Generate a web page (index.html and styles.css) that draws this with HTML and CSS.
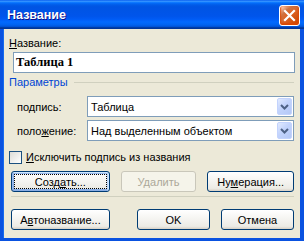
FILE: index.html
```html
<!DOCTYPE html>
<html>
<head>
    <title>Название</title>
    <link rel="stylesheet" href="styles.css">
</head>
<body>
    <div class="window">
        <div class="titlebar">
            <span class="title">Название</span>
            <span class="close-btn">
                <svg width="13" height="13" viewBox="0 0 13 13">
                    <path d="M2 2 L11 11 M11 2 L2 11" stroke="#fff" stroke-width="2.2" stroke-linecap="square"/>
                </svg>
            </span>
        </div>

        <div class="frame">
            <div class="field-label"><u>Н</u>азвание:</div>
            <div class="textbox">Таблица 1</div>

            <div class="group-head">
                <span class="group-title">Параметры</span>
                <span class="group-rule"></span>
            </div>

            <div class="params">
                <div class="param-row">
                    <span class="param-label">по<u>д</u>пись:</span>
                    <div class="combo">
                        <span class="combo-text">Таблица</span>
                        <span class="drop-btn">
                            <svg width="9" height="6" viewBox="0 0 9 6"><path d="M1 1 L4.5 4.5 L8 1" fill="none" stroke="#4d6185" stroke-width="2"/></svg>
                        </span>
                    </div>
                </div>
                <div class="param-row">
                    <span class="param-label">поло<u>ж</u>ение:</span>
                    <div class="combo">
                        <span class="combo-text">Над выделенным объектом</span>
                        <span class="drop-btn">
                            <svg width="9" height="6" viewBox="0 0 9 6"><path d="M1 1 L4.5 4.5 L8 1" fill="none" stroke="#4d6185" stroke-width="2"/></svg>
                        </span>
                    </div>
                </div>
            </div>

            <div class="check-row">
                <span class="check-box"></span>
                <span><u>И</u>сключить подпись из названия</span>
            </div>

            <div class="btn-row">
                <button class="xp-btn default-btn btn-create">Созд<u>а</u>ть...</button>
                <button class="xp-btn btn-delete" disabled>Удалить</button>
                <button class="xp-btn btn-numbering">Ну<u>м</u>ерация...</button>
            </div>

            <div class="separator"></div>

            <div class="btn-row">
                <button class="xp-btn btn-auto">А<u>в</u>тоназвание...</button>
                <div class="spacer"></div>
                <button class="xp-btn btn-ok">OK</button>
                <button class="xp-btn btn-cancel">Отмена</button>
            </div>
        </div>
    </div>
</body>
</html>
```

FILE: styles.css
```css
:root {
    --face: #ece9d8;
    --field-border: #7f9db9;
    --btn-border: #003c74;
    --group-blue: #0046d5;
    --rule: #d0d0bf;
}

body {
    margin: 0;
    font-family: 'Liberation Sans', Arial, sans-serif;
    font-size: 11px;
    color: #000;
}

u {
    text-decoration-thickness: 1px;
    text-underline-offset: 1px;
}

.window {
    width: 304px;
    height: 241px;
    display: flex;
    flex-direction: column;
    overflow: hidden;
}

.titlebar {
    height: 29px;
    flex: none;
    display: flex;
    align-items: center;
    justify-content: space-between;
    padding: 0 4px 0 7px;
    background: linear-gradient(180deg, #0058ee 0%, #3a93ff 4%, #288eff 6%, #127dff 8%, #036ffc 10%, #0262ee 14%, #0057e5 20%, #0054e3 24%, #0055eb 56%, #005bf5 66%, #026afe 76%, #0062ef 86%, #0052d6 92%, #0040ab 94%, #003092 100%);
    box-sizing: border-box;
}

.title {
    color: #fff;
    font-weight: bold;
    font-size: 12.5px;
    text-shadow: 1px 1px #0f1089;
    margin-top: 1px;
}

.close-btn {
    width: 21px;
    height: 21px;
    box-sizing: border-box;
    border: 1px solid #fff;
    border-radius: 3px;
    display: flex;
    align-items: center;
    justify-content: center;
    background: radial-gradient(circle at 90% 90%, #cc4600 0%, #dc6527 55%, #cd7546 70%, #ffccb2 90%, #fff 100%);
    box-shadow: inset 0 -1px 2px 1px #da4600;
    margin-top: 2px;
}

.frame {
    flex: 1;
    background: var(--face);
    border-style: solid;
    border-color: #0a52e0;
    border-width: 0 4px 3px 3px;
    box-shadow: inset 1px 0 #166aee;
    padding: 8px 6px 0 6px;
    display: flex;
    flex-direction: column;
}

.field-label {
    line-height: 13px;
}

.textbox {
    margin: 2px -1px 0 4px;
    height: 21px;
    box-sizing: border-box;
    border: 1px solid var(--field-border);
    background: #fff;
    font-family: 'Liberation Serif', 'Times New Roman', serif;
    font-weight: bold;
    font-size: 12.5px;
    line-height: 19px;
    padding-left: 2px;
}

.group-head {
    margin-top: 3px;
    display: flex;
    align-items: center;
    gap: 6px;
    line-height: 13px;
}

.group-title {
    color: var(--group-blue);
}

.group-rule {
    flex: 1;
    height: 1px;
    background: var(--rule);
    margin-top: -1px;
}

.params {
    margin-top: 7px;
    display: flex;
    flex-direction: column;
    gap: 3px;
}

.param-row {
    display: grid;
    grid-template-columns: 78px 1fr;
    align-items: center;
}

.param-label {
    padding-left: 8px;
}

.combo {
    height: 21px;
    box-sizing: border-box;
    border: 1px solid var(--field-border);
    background: #fff;
    display: flex;
    align-items: center;
    justify-content: space-between;
    padding: 1px 1px 1px 3px;
}

.drop-btn {
    width: 15px;
    height: 17px;
    box-sizing: border-box;
    border: 1px solid #c3d3fd;
    border-radius: 2px;
    background: linear-gradient(135deg, #e1eaff 0%, #c2d3fc 45%, #b4c8f6 100%);
    display: flex;
    align-items: center;
    justify-content: center;
}

.check-row {
    margin-top: 10px;
    display: flex;
    align-items: center;
    gap: 4px;
    line-height: 13px;
}

.check-box {
    width: 13px;
    height: 13px;
    box-sizing: border-box;
    border: 1px solid #1c5180;
    background: linear-gradient(135deg, #dcdcd7, #fff);
}

.btn-row {
    margin: 7px 0 0 2px;
    display: flex;
    justify-content: space-between;
    gap: 11px;
}

.spacer {
    flex: 1;
    margin-right: -11px;
}

.xp-btn {
    height: 21px;
    box-sizing: border-box;
    border: 1px solid var(--btn-border);
    border-radius: 3px;
    background: linear-gradient(180deg, #fff, #ecebe5 86%, #d8d0c4);
    font-family: inherit;
    font-size: 11px;
    color: #000;
    padding: 0;
}

.default-btn {
    box-shadow: inset -1px 1px #cee7ff, inset 1px 2px #98b8ea, inset -2px 2px #bcd4f6, inset 1px -1px #89ade4, inset 2px -2px #89ade4;
    outline: 1px dotted #000;
    outline-offset: -4px;
}

.xp-btn:disabled {
    border-color: #c9c7ba;
    background: #f5f4ea;
    color: #aca899;
}

.btn-create,
.btn-auto { width: 99px; }
.btn-delete { width: 76px; }
.btn-numbering { width: 87px; }
.btn-ok,
.btn-cancel { width: 73px; }

.separator {
    margin: 4px 0 0 2px;
    height: 1px;
    background: var(--rule);
}

.separator + .btn-row {
    margin-top: 12px;
}
```
